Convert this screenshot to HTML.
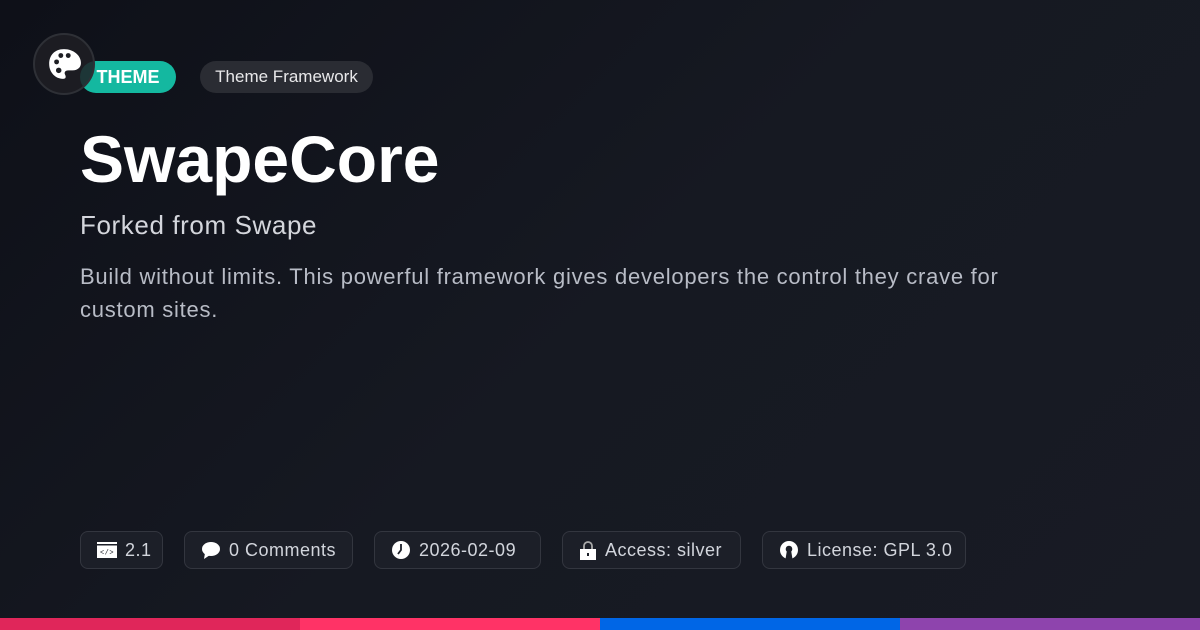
<!DOCTYPE html>
<html><head><meta charset="utf-8"><style>
*{margin:0;padding:0;box-sizing:border-box}
body{width:1200px;height:630px;overflow:hidden;background:linear-gradient(135deg,#0e1018 0%,#161922 50%,#181b24 100%);font-family:"Liberation Sans",sans-serif;position:relative;color:#fff}
.abs{position:absolute}
.logo{left:33px;top:33px;width:62px;height:62px;border-radius:50%;background:rgba(30,31,36,0.85);border:2px solid #2e3036;display:flex;align-items:center;justify-content:center;z-index:2}
.pill{top:61px;height:32px;border-radius:16px;display:flex;align-items:center;justify-content:center;font-size:17px}
.theme{left:80px;width:96px;background:#14b8a0;font-weight:bold;font-size:18px}
.fw{left:200px;width:173px;background:#2a2c33;color:#e8e8ea}
h1{position:absolute;left:80px;top:121px;font-size:66px;font-weight:bold;letter-spacing:0px}
.sub{left:80px;top:210px;font-size:26px;letter-spacing:0.6px;color:#d4d6dc}
.desc{left:80px;top:260px;font-size:22px;letter-spacing:0.75px;line-height:33px;color:#b8bcc6;width:960px}
.chip{top:531px;height:38px;border:1px solid #33363f;background:#1c1f28;border-radius:8px;display:flex;align-items:center;font-size:18px;letter-spacing:0.5px;color:#d2d5dc;padding-left:16px;gap:8px}
.bar{top:618px;height:12px;width:300px}
</style></head><body>
<div class="abs logo"><svg width="36" height="36" viewBox="0 0 34 34"><path d="M17 3C8 3 3 9 3 17c0 8 6 14 13 14 3 0 3-2 2-4s0-4 3-4h4c5 0 8-3 8-7C33 9 26 3 17 3z" fill="#fff"/><circle cx="10" cy="15" r="2.3" fill="#1e1f24"/><circle cx="14" cy="9" r="2.3" fill="#1e1f24"/><circle cx="21" cy="9" r="2.3" fill="#1e1f24"/><circle cx="12" cy="23" r="2.6" fill="#1e1f24"/></svg></div>
<div class="abs pill theme">THEME</div>
<div class="abs pill fw">Theme Framework</div>
<h1>SwapeCore</h1>
<div class="abs sub">Forked from Swape</div>
<div class="abs desc">Build without limits. This powerful framework gives developers the control they crave for custom sites.</div>
<div class="abs chip" style="left:80px;width:83px"><svg width="20" height="16"><rect x="0" y="0" width="20" height="16" fill="#fff"/><rect x="0" y="2" width="20" height="1.5" fill="#1c1f28"/><text x="10" y="12.5" font-size="7" text-anchor="middle" fill="#1c1f28" font-family="Liberation Mono">&lt;/&gt;</text></svg>2.1</div>
<div class="abs chip" style="left:184px;width:169px"><svg width="20" height="18"><ellipse cx="10" cy="8" rx="9" ry="7" fill="#fff"/><path d="M4 12 L3 18 L9 14z" fill="#fff"/></svg>0 Comments</div>
<div class="abs chip" style="left:374px;width:167px"><svg width="20" height="20"><circle cx="10" cy="10" r="9" fill="#fff"/><path d="M10 4v6l-3 4" stroke="#1c1f28" stroke-width="1.8" fill="none"/></svg>2026-02-09</div>
<div class="abs chip" style="left:562px;width:179px"><svg width="18" height="20"><path d="M5 9V6a4 4 0 0 1 8 0v3" stroke="#aaa" stroke-width="1.8" fill="none"/><rect x="1" y="9" width="16" height="11" fill="#fff"/><rect x="8" y="13" width="2" height="3" fill="#1c1f28"/></svg>Access: silver</div>
<div class="abs chip" style="left:762px;width:204px"><svg width="20" height="20"><circle cx="10" cy="10" r="9" fill="#fff"/><circle cx="10" cy="9" r="3.3" fill="#1c1f28"/><path d="M8 10 L6.5 19 H13.5 L12 10z" fill="#1c1f28"/></svg>License: GPL 3.0</div>
<div class="abs bar" style="left:0;background:#e0265a"></div>
<div class="abs bar" style="left:300px;background:#ff3366"></div>
<div class="abs bar" style="left:600px;background:#0066e6"></div>
<div class="abs bar" style="left:900px;background:#8e44ad"></div>
</body></html>
